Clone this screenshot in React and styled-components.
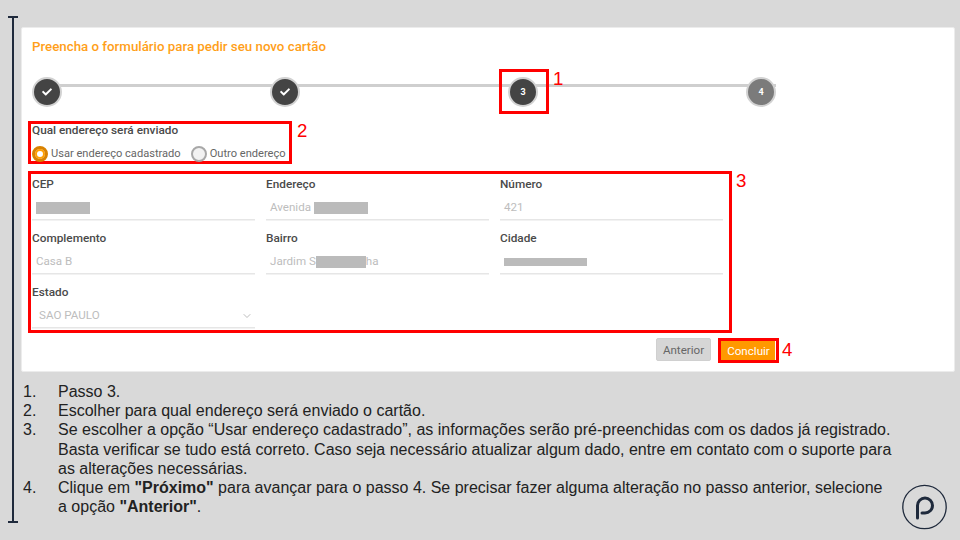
import styled, { createGlobalStyle } from "styled-components";
import { FaCheck } from "react-icons/fa";
import { FiChevronDown } from "react-icons/fi";

const Global = createGlobalStyle`
  * { box-sizing: border-box; }
  html, body { margin: 0; padding: 0; }
  body { background: #d9d9d9; font-family: Roboto, "Liberation Sans", sans-serif; }
`;

const Page = styled.div`
  position: relative;
  width: 960px;
  height: 540px;
  overflow: hidden;
  background: #d9d9d9;
  display: flex;
  padding: 16px 0 0 8px;
`;

const Bracket = styled.div`
  flex: none;
  width: 10px;
  height: 507px;
  border-top: 2px solid #1f2a3c;
  border-bottom: 2px solid #1f2a3c;
  display: flex;
  justify-content: center;
  &::before {
    content: "";
    width: 2px;
    background: #1f2a3c;
  }
`;

const Main = styled.div`
  margin: 11px 0 0 3px;
  width: 934px;
`;

const Card = styled.div`
  height: 345px;
  background: #fff;
  border: 1px solid #ececec;
  border-radius: 2px;
  padding: 11px 0 0 6px;
`;

const Title = styled.h1`
  margin: 0 0 22px 4px;
  height: 16px;
  font-size: 13.3px;
  line-height: 16px;
  font-weight: 500;
  color: #ff9f1a;
`;

const Stepper = styled.div`
  position: relative;
  width: 744px;
  margin: 0 0 14px 4px;
  display: flex;
  gap: 208px;
  &::before {
    content: "";
    position: absolute;
    left: 15px;
    right: 0;
    top: 7px;
    height: 3px;
    background: #cfcfcf;
  }
`;

const Step = styled.div`
  position: relative;
  width: 30px;
  height: 30px;
  border-radius: 50%;
  border: 2px solid #d2d2d2;
  background: ${(p) => (p.$todo ? "#7b7b7b" : "#444")};
  color: #fff;
  font-size: 9px;
  font-weight: 700;
  display: flex;
  align-items: center;
  justify-content: center;
`;

const StepFrame = styled.div`
  position: absolute;
  left: -11px;
  top: -10px;
  width: 50px;
  height: 45px;
  border: 3px solid #f00;
`;

const Callout = styled.span`
  position: absolute;
  left: ${(p) => p.$left}px;
  top: ${(p) => p.$top}px;
  font-family: "Liberation Sans", Arial, sans-serif;
  font-size: 18.67px;
  line-height: 20px;
  font-weight: 400;
  color: #f00;
`;

const RadioBox = styled.div`
  position: relative;
  width: 264px;
  height: 43px;
  border: 3px solid #f00;
  padding: 0 0 0 1px;
`;

const FieldLabel = styled.div`
  height: 13px;
  font-size: 11.8px;
  line-height: 13px;
  font-weight: 500;
  color: #4a4a4a;
`;

const RadioRow = styled.div`
  display: flex;
  gap: 10px;
  margin-top: 9px;
`;

const Radio = styled.label`
  display: flex;
  align-items: center;
  gap: 3px;
  font-size: 11.1px;
  line-height: 16px;
  color: #666;
`;

const RadioDot = styled.span`
  width: 16px;
  height: 16px;
  border-radius: 50%;
  border: ${(p) => (p.$on ? "3px solid #d98200" : "2px solid #a8a8a8")};
  background: ${(p) => (p.$on ? "#fff" : "#f2f2f2")};
  box-shadow: ${(p) => (p.$on ? "inset 0 0 0 2px #ffa000" : "none")};
`;

const FieldBox = styled.div`
  position: relative;
  width: 704px;
  height: 162px;
  margin-top: 7px;
  border: 3px solid #f00;
  padding: 4px 0 0 1px;
  display: grid;
  grid-template-columns: repeat(3, 223px);
  grid-auto-rows: 54px;
  column-gap: 11px;
`;

const Field = styled.div`
  display: flex;
  flex-direction: column;
`;

const Value = styled.div`
  margin-top: 8px;
  height: 21px;
  padding: 1px 0 0 ${(p) => (p.$select ? 7 : 4)}px;
  border-bottom: 1px solid #e6e6e6;
  box-shadow: 0 1px 0 #f2f2f2;
  font-size: 11.6px;
  line-height: 15px;
  color: #bdbdbd;
  display: flex;
  align-items: flex-start;
  justify-content: space-between;
  white-space: pre;
`;

const Redact = styled.span`
  display: inline-block;
  vertical-align: top;
  width: ${(p) => p.$w}px;
  height: ${(p) => p.$h || 12}px;
  margin-top: ${(p) => p.$mt ?? 2}px;
  background: #bbb;
`;

const Inline = styled.span``;

const Actions = styled.div`
  position: relative;
  width: 751px;
  margin-top: 5px;
  display: flex;
  justify-content: flex-end;
  gap: 7px;
`;

const GreyButton = styled.button`
  width: 55px;
  height: 23px;
  border: 1px solid #d0d0d0;
  border-radius: 2px;
  background: #d6d6d6;
  color: #666;
  font: 400 11.6px Roboto, sans-serif;
  padding: 0;
`;

const OrangeButton = styled.button`
  width: 61px;
  height: 25px;
  border: 3px solid #f00;
  background: #ff9900;
  box-shadow: inset -1px 0 0 #fff;
  color: #fff;
  font: 400 11.6px Roboto, sans-serif;
  padding: 0;
`;

const Steps = styled.ol`
  margin: 10px 0 0 0;
  padding: 0;
  width: 871px;
  list-style: none;
  font-family: "Liberation Sans", Arial, sans-serif;
  font-size: 16px;
  line-height: 19.2px;
  color: #222;
`;

const Item = styled.li`
  position: relative;
  padding-left: 37px;
  &::before {
    content: "${(p) => p.$n}.";
    position: absolute;
    left: 2px;
  }
`;

const Logo = styled.svg`
  position: absolute;
  left: 901px;
  top: 484px;
`;

const fields = [
  { label: "CEP", value: <Redact $w={54} /> },
  { label: "Endereço", value: <Inline>Avenida <Redact $w={54} /></Inline> },
  { label: "Número", value: "421" },
  { label: "Complemento", value: "Casa B" },
  { label: "Bairro", value: <Inline>Jardim S<Redact $w={50} />ha</Inline> },
  { label: "Cidade", value: <Redact $w={83} $h={8} $mt={4} /> },
];

export default function App() {
  return (
    <Page>
      <Global />
      <Bracket />
      <Main>
        <Card>
          <Title>Preencha o formulário para pedir seu novo cartão</Title>
          <Stepper>
            <Step><FaCheck size={10} /></Step>
            <Step><FaCheck size={10} /></Step>
            <Step>
              3
              <StepFrame />
              <Callout $left={43} $top={-10}>1</Callout>
            </Step>
            <Step $todo>4</Step>
          </Stepper>

          <RadioBox>
            <FieldLabel>Qual endereço será enviado</FieldLabel>
            <RadioRow>
              <Radio><RadioDot $on />Usar endereço cadastrado</Radio>
              <Radio><RadioDot />Outro endereço</Radio>
            </RadioRow>
            <Callout $left={266} $top={-3}>2</Callout>
          </RadioBox>

          <FieldBox>
            {fields.map((f) => (
              <Field key={f.label}>
                <FieldLabel>{f.label}</FieldLabel>
                <Value>{f.value}</Value>
              </Field>
            ))}
            <Field>
              <FieldLabel>Estado</FieldLabel>
              <Value $select>
                SAO PAULO
                <FiChevronDown size={12} color="#bdbdbd" style={{ marginTop: 2, marginRight: 2 }} />
              </Value>
            </Field>
            <Callout $left={705} $top={-3}>3</Callout>
          </FieldBox>

          <Actions>
            <GreyButton>Anterior</GreyButton>
            <OrangeButton>Concluir</OrangeButton>
            <Callout $left={754} $top={2}>4</Callout>
          </Actions>
        </Card>

        <Steps>
          <Item $n={1}>Passo 3.</Item>
          <Item $n={2}>Escolher para qual endereço será enviado o cartão.</Item>
          <Item $n={3}>
            Se escolher a opção “Usar endereço cadastrado”, as informações serão pré-preenchidas com os dados já registrado. Basta verificar se tudo está correto. Caso seja necessário atualizar algum dado, entre em contato com o suporte para as alterações necessárias.
          </Item>
          <Item $n={4}>
            Clique em <b>"Próximo"</b> para avançar para o passo 4. Se precisar fazer alguma alteração no passo anterior, selecione a opção <b>"Anterior"</b>.
          </Item>
        </Steps>
      </Main>

      <Logo width="47" height="46" viewBox="0 0 47 46" fill="none" stroke="#1f2a3c">
        <circle cx="23.5" cy="23" r="21.7" strokeWidth="1.3" />
        <path d="M16.5 34 V21.5 a7.5 7.5 0 1 1 7.5 7.5 h-3" strokeWidth="3" strokeLinecap="round" />
      </Logo>
    </Page>
  );
}
